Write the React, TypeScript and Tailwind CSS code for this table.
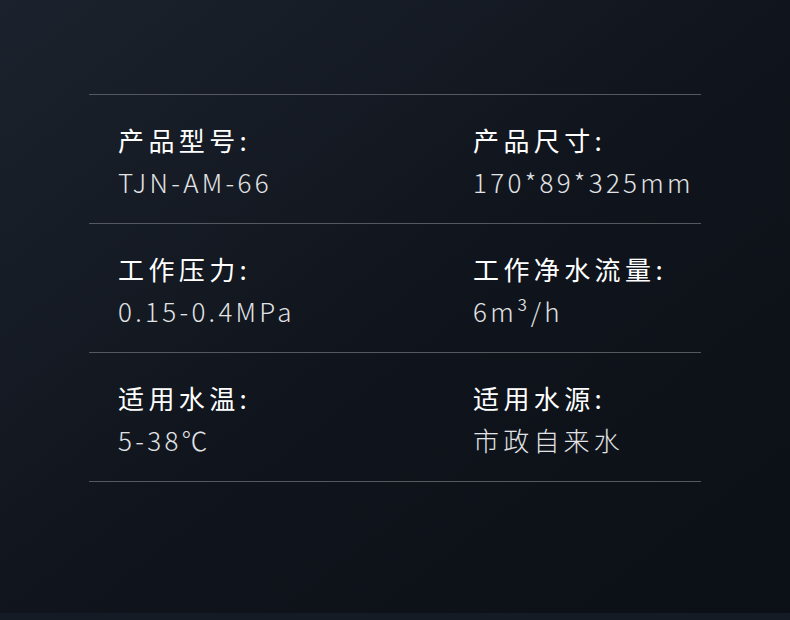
const specs = [
  [
    { label: '产品型号:', value: 'TJN-AM-66' },
    { label: '产品尺寸:', value: '170*89*325mm' },
  ],
  [
    { label: '工作压力:', value: '0.15-0.4MPa' },
    { label: '工作净水流量:', value: '6m³/h' },
  ],
  [
    { label: '适用水温:', value: '5-38℃' },
    { label: '适用水源:', value: '市政自来水', cjk: true },
  ],
]

function Spec({ label, value, cjk }: { label: string; value: string; cjk?: boolean }) {
  return (
    <div className="flex flex-col gap-[6px]">
      <div className="text-[26px] leading-[36px] font-normal tracking-[4.4px] text-white">{label}</div>
      <div
        className={`text-[26px] leading-[36px] font-light text-[#e2e3e5] ${cjk ? 'tracking-[4.2px]' : 'tracking-[3.3px]'}`}
      >
        {value}
      </div>
    </div>
  )
}

export default function App() {
  return (
    <div
      className="w-[790px] h-[620px] flex flex-col bg-gradient-to-br from-[#1c222d] via-[#10151d] to-[#0b0f16] overflow-hidden"
      style={{ fontFamily: '"Noto Sans CJK SC", "Noto Sans", sans-serif' }}
    >
      <div className="flex-1 pt-[94px] px-[89px]">
        <div className="border-b border-[#55595f]">
          {specs.map((row, i) => (
            <div key={i} className="h-[129px] border-t border-[#55595f] grid grid-cols-[355px_1fr] pl-[29px] pt-[27px]">
              <Spec {...row[0]} />
              <Spec {...row[1]} />
            </div>
          ))}
        </div>
      </div>
      <div className="h-[7px] bg-[#151b25]" />
    </div>
  )
}
